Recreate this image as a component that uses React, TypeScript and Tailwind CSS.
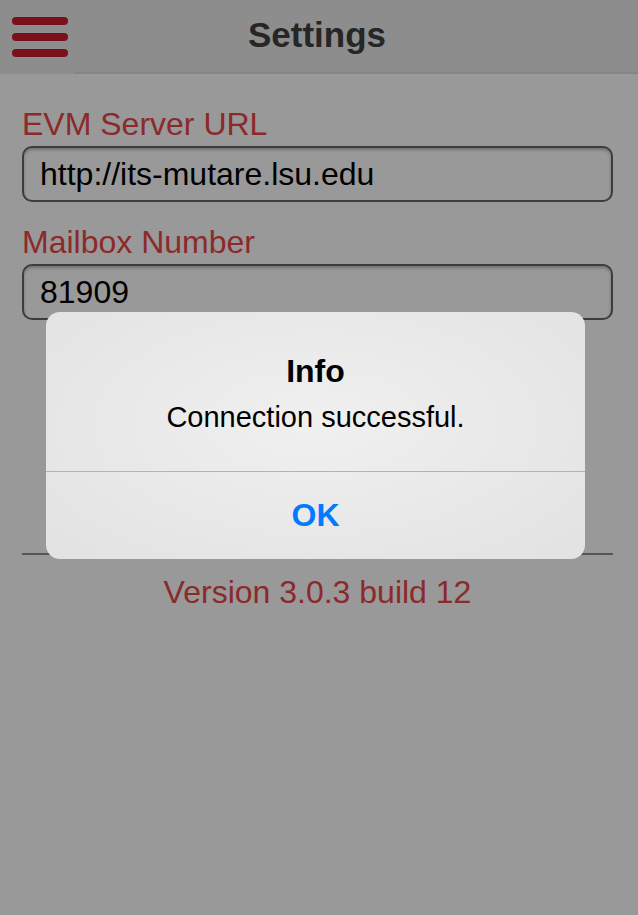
import * as React from "react"

const font = { fontFamily: '"Liberation Sans", Arial, sans-serif' }

function Hamburger() {
  return (
    <div className="flex h-[74px] w-[74px] flex-col gap-[8px] bg-[#8d8d8d] pl-[12px] pt-[17px]">
      <div className="h-[8px] w-[56px] rounded-full bg-[#7a101a]" />
      <div className="h-[8px] w-[56px] rounded-full bg-[#7a101a]" />
      <div className="h-[8px] w-[56px] rounded-full bg-[#7a101a]" />
    </div>
  )
}

function Field({ label, value }: { label: string; value: string }) {
  return (
    <div>
      <div className="text-[32px] leading-[40px] text-[#8b2a2a]">{label}</div>
      <div className="mt-[2px] flex h-[56px] items-center rounded-[10px] border-2 border-[#3d3d3d] pl-[16px] text-[32px] text-black shadow-[inset_0_2px_3px_rgba(0,0,0,0.25)]">
        {value}
      </div>
    </div>
  )
}

export default function App() {
  return (
    <div className="relative h-[915px] w-[638px] overflow-hidden bg-[#999999]" style={font}>
      <div className="grid h-[74px] grid-cols-[74px_1fr_74px] bg-[#8d8d8d]">
        <Hamburger />
        <div className="flex items-center justify-center border-b-2 border-[#858585] pb-[2px] pr-[4px] text-[35px] font-bold text-[#262626]">
          Settings
        </div>
        <div className="border-b-2 border-[#858585]" />
      </div>

      <div className="pl-[22px] pr-[25px] pt-[30px]">
        <Field label="EVM Server URL" value="http://its-mutare.lsu.edu" />
        <div className="mt-[20px]">
          <Field label="Mailbox Number" value="81909" />
        </div>
        <div className="h-[233px]" />
        <div className="h-[2px] bg-[#555555]" />
        <div className="mt-[17px] text-center text-[32px] leading-[40px] text-[#8b2a2a]">
          Version 3.0.3 build 12
        </div>
      </div>

      <div className="absolute left-[46px] top-[312px] w-[539px] overflow-hidden rounded-[14px] bg-[radial-gradient(ellipse_at_50%_45%,#f0f0f0,#e2e2e2)] text-center text-black">
        <div className="h-[159px] pt-[39px]">
          <div className="text-[32px] font-bold leading-[40px]">Info</div>
          <div className="mt-[8px] text-[29px] leading-[36px]">Connection successful.</div>
        </div>
        <div className="flex h-[88px] items-center justify-center border-t border-[#b3b3b3] pb-[1px] text-[32px] font-bold text-[#007aff]">
          OK
        </div>
      </div>
    </div>
  )
}
